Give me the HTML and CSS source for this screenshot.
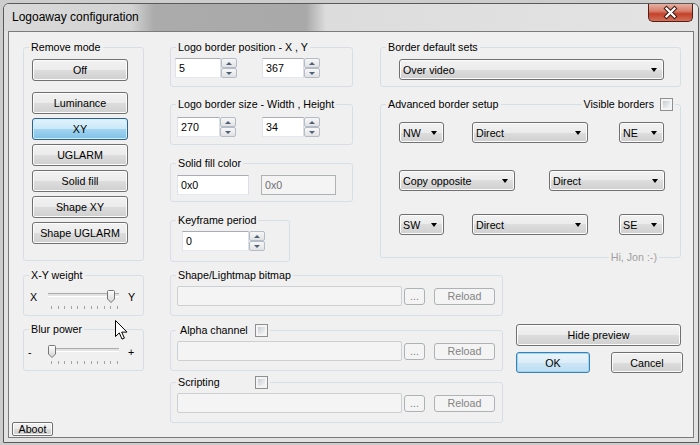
FILE: index.html
```html
<!DOCTYPE html>
<html lang="en">
<head>
  <meta charset="UTF-8" />
  <title>Logoaway configuration</title>
  <link rel="stylesheet" href="styles.css">
</head>
<body>

  <div class="window">
    <div class="titlebar">
      <span class="title">Logoaway configuration</span>
      <span class="close">
        <svg width="45" height="18" viewBox="0 0 45 18">
          <path d="M18.5 4.5 L26.5 12.5 M26.5 4.5 L18.5 12.5" stroke="#3e1a12" stroke-width="4.2" stroke-linecap="square"/>
          <path d="M18.5 4.5 L26.5 12.5 M26.5 4.5 L18.5 12.5" stroke="#fff" stroke-width="2.2" stroke-linecap="square"/>
        </svg>
      </span>
    </div>

    <div class="client">
      <!-- upper half -->
      <div class="top">
        <div class="col col-left">
          <div class="group g-mode">
            <span class="cap">Remove mode</span>
            <button class="btn">Off</button>
            <button class="btn sep">Luminance</button>
            <button class="btn on">XY</button>
            <button class="btn">UGLARM</button>
            <button class="btn">Solid fill</button>
            <button class="btn">Shape XY</button>
            <button class="btn">Shape UGLARM</button>
          </div>
        </div>

        <div class="col col-mid">
          <div class="group g-pos">
            <span class="cap">Logo border position - X , Y</span>
            <div class="row">
              <div class="spin"><span class="edit w46">5</span><span class="ud"><i class="up"></i><i class="dn"></i></span></div>
              <div class="spin second"><span class="edit w42">367</span><span class="ud"><i class="up"></i><i class="dn"></i></span></div>
            </div>
          </div>
          <div class="group g-size">
            <span class="cap">Logo border size - Width , Height</span>
            <div class="row">
              <div class="spin"><span class="edit w43">270</span><span class="ud"><i class="up"></i><i class="dn"></i></span></div>
              <div class="spin second"><span class="edit w42">34</span><span class="ud"><i class="up"></i><i class="dn"></i></span></div>
            </div>
          </div>
          <div class="group g-fill">
            <span class="cap">Solid fill color</span>
            <div class="row">
              <span class="edit w72">0x0</span>
              <span class="edit ro w75">0x0</span>
            </div>
          </div>
          <div class="group g-key">
            <span class="cap">Keyframe period</span>
            <div class="row">
              <div class="spin"><span class="edit w67">0</span><span class="ud"><i class="up"></i><i class="dn"></i></span></div>
            </div>
          </div>
        </div>

        <div class="col col-right">
          <div class="group g-sets">
            <span class="cap">Border default sets</span>
            <div class="sel w265">Over video</div>
          </div>
          <div class="group g-adv">
            <div class="caprow">
              <span class="cap">Advanced border setup</span>
              <span class="cap cc">Visible borders <span class="chk"></span></span>
            </div>
            <div class="row r1">
              <div class="sel w45">NW</div>
              <div class="sel w116 mid">Direct</div>
              <div class="sel w45 end">NE</div>
            </div>
            <div class="row r2">
              <div class="sel w116">Copy opposite</div>
              <div class="sel w116 opp">Direct</div>
            </div>
            <div class="row r3">
              <div class="sel w45">SW</div>
              <div class="sel w116 mid">Direct</div>
              <div class="sel w45 end">SE</div>
            </div>
            <span class="cap hi">Hi, Jon :-)</span>
          </div>
        </div>
      </div>

      <!-- lower half -->
      <div class="bottom">
        <div class="col col-left">
          <div class="group g-xy">
            <span class="cap">X-Y weight</span>
            <div class="slider">
              <span class="sl-end">X</span>
              <div class="sl-body">
                <div class="sl-track">
                  <span class="sl-thumb" style="left:59px">
                    <svg width="8" height="13" viewBox="0 0 8 13">
                      <defs><linearGradient id="tg1" x1="0" y1="0" x2="0" y2="1"><stop offset="0" stop-color="#fdfdfd"/><stop offset="1" stop-color="#d6d6d6"/></linearGradient></defs>
                      <path d="M1.5 .5h5a1 1 0 0 1 1 1v7.5l-3.5 3.5l-3.5-3.5v-7.5a1 1 0 0 1 1-1z" fill="url(#tg1)" stroke="#767676"/>
                    </svg>
                  </span>
                </div>
                <div class="sl-ticks"><i></i><i></i><i></i><i></i><i></i><i></i><i></i><i></i><i></i><i></i><i></i></div>
              </div>
              <span class="sl-end r">Y</span>
            </div>
          </div>
          <div class="group g-blur">
            <span class="cap">Blur power</span>
            <div class="slider">
              <span class="sl-end minus">-</span>
              <div class="sl-body">
                <div class="sl-track">
                  <span class="sl-thumb" style="left:0px">
                    <svg width="8" height="13" viewBox="0 0 8 13">
                      <defs><linearGradient id="tg2" x1="0" y1="0" x2="0" y2="1"><stop offset="0" stop-color="#fdfdfd"/><stop offset="1" stop-color="#d6d6d6"/></linearGradient></defs>
                      <path d="M1.5 .5h5a1 1 0 0 1 1 1v7.5l-3.5 3.5l-3.5-3.5v-7.5a1 1 0 0 1 1-1z" fill="url(#tg2)" stroke="#767676"/>
                    </svg>
                  </span>
                </div>
                <div class="sl-ticks"><i></i><i></i><i></i><i></i><i></i><i></i><i></i><i></i><i></i><i></i><i></i></div>
              </div>
              <span class="sl-end r">+</span>
            </div>
          </div>
          <button class="btn aboot">Aboot</button>
        </div>

        <div class="col col-wide">
          <div class="group g-file">
            <span class="cap">Shape/Lightmap bitmap</span>
            <div class="row">
              <span class="edit off w225"></span>
              <button class="btn dis dots">...</button>
              <button class="btn dis reload">Reload</button>
            </div>
          </div>
          <div class="group g-file g-alpha">
            <span class="cap cc fixed pad">Alpha channel <span class="chk"></span></span>
            <div class="row">
              <span class="edit off w225"></span>
              <button class="btn dis dots">...</button>
              <button class="btn dis reload">Reload</button>
            </div>
          </div>
          <div class="group g-file g-script">
            <span class="cap cc fixed">Scripting <span class="chk"></span></span>
            <div class="row">
              <span class="edit off w225"></span>
              <button class="btn dis dots">...</button>
              <button class="btn dis reload">Reload</button>
            </div>
          </div>
        </div>

        <div class="col col-btns">
          <button class="btn hide">Hide preview</button>
          <div class="row">
            <button class="btn ok">OK</button>
            <button class="btn cancel">Cancel</button>
          </div>
        </div>
      </div>
    </div>
  </div>

  <!-- mouse pointer caught in the screenshot -->
  <svg class="cursor" width="13" height="21" viewBox="0 0 13 21">
    <path d="M.5 .5v16l3.8-3.6 2.7 6.2 2.4-1-2.7-6h5.3z" fill="#fff" stroke="#000"/>
  </svg>

</body>
</html>
```

FILE: styles.css
```css
/* General styling */
* {
  box-sizing: border-box;
}

body {
  margin: 0;
  background: #cdcdcd;
  font-family: "Liberation Sans", Arial, sans-serif;
  font-size: 10.7px;
  color: #000;
  overflow: hidden;
}

/* Window frame */
.window {
  display: flex;
  flex-direction: column;
  width: 696px;
  height: 440px;
  margin: 3px 0 0 3px;
  padding: 0 4px 4px;
  border: 1px solid #595959;
  border-radius: 6px 6px 0 0;
  background: #e2e2e2;
}

.titlebar {
  display: flex;
  align-items: flex-start;
  flex: none;
  height: 27px;
  margin: 0 -4px;
  padding-left: 8px;
  border-radius: 5px 5px 0 0;
  background: linear-gradient(to right, #dadada 0, #d2d2d2 128px, #ababab 150px, #a9a9a9 302px, #dcdcdc 322px, #e4e4e4 100%);
}

.title {
  font-size: 12px;
  line-height: 27px;
}

.close {
  display: block;
  width: 45px;
  height: 18px;
  margin-left: auto;
  margin-right: 5px;
  border: 1px solid #4d2118;
  border-top: none;
  border-radius: 0 0 5px 5px;
  background: linear-gradient(#e6b0a3, #d67d69 42%, #c4412a 58%, #d3705a);
}

.close svg {
  display: block;
  margin: 0 -1px;
}

.client {
  display: flex;
  flex-direction: column;
  height: 407px;
  border: 1px solid #7b7b7b;
  background: #f0f0f0;
}

.top {
  display: flex;
  align-items: flex-start;
  padding: 15px 0 0 14px;
}

.bottom {
  display: flex;
  flex: 1;
  margin-top: 13px;
  padding-left: 14px;
}

.col {
  display: flex;
  flex-direction: column;
}

.col-left {
  width: 121px;
}

.col-mid {
  width: 183px;
  margin-left: 26px;
}

.col-right {
  width: 301px;
  margin-left: 27px;
}

.col-wide {
  width: 333px;
  margin-left: 26px;
}

.col-btns {
  width: 166px;
  margin-left: 13px;
}

/* Group boxes */
.group {
  display: flex;
  flex-direction: column;
  align-items: flex-start;
  border: 1px solid #d5dfe5;
  border-radius: 3px;
}

.cap {
  flex: none;
  height: 13px;
  line-height: 13px;
  margin: -7px 0 0 5px;
  padding: 0 2px;
  background: #f0f0f0;
  white-space: nowrap;
}

.cap.cc {
  display: flex;
  align-items: center;
}

.cap.cc .chk {
  margin-left: 6px;
}

.cap.fixed {
  width: 94px;
  justify-content: space-between;
}

.cap.pad {
  padding-left: 4px;
}

.caprow {
  display: flex;
  align-self: stretch;
  height: 13px;
  margin-top: -7px;
}

.caprow .cap {
  margin-top: 0;
}

.caprow .cc {
  margin-left: auto;
  margin-right: 5px;
}

.cap.hi {
  align-self: flex-end;
  margin: auto 21px -7px 0;
  color: #a0a0a0;
}

.row {
  display: flex;
  align-items: center;
}

/* Buttons */
.btn {
  display: block;
  flex: none;
  height: 22px;
  padding: 0;
  border: 1px solid #707070;
  border-radius: 3px;
  background: linear-gradient(#f2f2f2, #ebebeb 50%, #dddddd 50%, #cfcfcf);
  box-shadow: inset 0 0 0 1px #fcfcfc;
  font: inherit;
  color: #000;
  text-align: center;
}

.btn.on {
  border-color: #2c628b;
  background: linear-gradient(#e1f2fb, #c9e8f8 50%, #a3d5f1 50%, #7fc1e6);
  box-shadow: inset 0 0 0 1px #d6eefb;
}

.btn.ok {
  width: 74px;
  height: 21px;
  border-color: #3c7fb1;
  background: linear-gradient(#e9f4fb, #dcedf8 50%, #cbe5f5 50%, #bedef1);
  box-shadow: inset 0 0 0 1px #9cd6f5;
}

.btn.cancel {
  width: 72px;
  height: 21px;
  margin-left: 21px;
}

.btn.hide {
  width: 165px;
  margin-top: 49px;
}

.col-btns .row {
  margin-top: 6px;
}

.btn.dis {
  height: 17px;
  border-color: #adb2b5;
  background: #f4f4f4;
  box-shadow: none;
  color: #838383;
}

.btn.dots {
  width: 21px;
  margin-left: 2px;
}

.btn.reload {
  width: 61px;
  margin-left: 9px;
}

.btn.aboot {
  width: 41px;
  height: 14px;
  margin: auto 0 1px -11px;
  border-radius: 2px;
  line-height: 12px;
}

/* Remove mode */
.g-mode {
  height: 214px;
}

.g-mode .btn {
  width: 96px;
  margin: 4px 0 0 8px;
}

.g-mode .btn:first-of-type {
  margin-top: 5px;
}

.g-mode .btn.sep {
  margin-top: 11px;
}

/* Edits and spinners */
.edit {
  display: block;
  flex: none;
  height: 20px;
  line-height: 18px;
  padding-left: 3px;
  border: 1px solid;
  border-color: #abadb3 #dbdfe6 #e3e9ef #e2e3ea;
  background: #fff;
}

.edit.ro {
  margin-left: 12px;
  border-color: #adb2b5;
  background: #f4f4f4;
  color: #6d6d6d;
}

.edit.off {
  border-color: #cdd0d3;
  border-radius: 2px;
  background: #f4f4f4;
}

.spin {
  display: flex;
}

.ud {
  display: flex;
  flex-direction: column;
  width: 16px;
  height: 20px;
}

.ud i {
  display: flex;
  flex: 1;
  align-items: center;
  justify-content: center;
  border: 1px solid #b3bcc8;
  border-radius: 2px;
  background: linear-gradient(#f7f7f7, #e2e2e2);
}

.ud i::after {
  content: "";
  border-left: 3px solid transparent;
  border-right: 3px solid transparent;
}

.ud .up::after {
  border-bottom: 3px solid #4d5f79;
}

.ud .dn::after {
  border-top: 3px solid #4d5f79;
}

.w42 { width: 42px; }
.w43 { width: 43px; }
.w45 { width: 45px; }
.w46 { width: 46px; }
.w67 { width: 67px; }
.w72 { width: 72px; }
.w75 { width: 75px; }
.w116 { width: 116px; }
.w225 { width: 225px; }
.w265 { width: 265px; }

.g-pos {
  width: 183px;
  height: 40px;
}

.g-pos .row {
  margin: 4px 0 0 4px;
}

.g-pos .second {
  margin-left: 25px;
}

.g-size {
  width: 183px;
  height: 41px;
  margin-top: 17px;
}

.g-size .row {
  margin: 6px 0 0 6px;
}

.g-size .second {
  margin-left: 26px;
}

.g-fill {
  width: 183px;
  height: 39px;
  margin-top: 18px;
}

.g-fill .row {
  margin: 5px 0 0 6px;
}

.g-key {
  width: 120px;
  height: 42px;
  margin-top: 18px;
}

.g-key .row {
  margin: 4px 0 0 11px;
}

/* Combo boxes */
.sel {
  display: flex;
  flex: none;
  align-items: center;
  height: 21px;
  padding: 0 6px 0 3px;
  border: 1px solid #707070;
  border-radius: 3px;
  background: linear-gradient(#f2f2f2, #ebebeb 50%, #dddddd 50%, #cfcfcf);
  box-shadow: inset 0 0 0 1px #fcfcfc;
  white-space: nowrap;
}

.sel::after {
  content: "";
  margin-left: auto;
  border-left: 3.5px solid transparent;
  border-right: 3.5px solid transparent;
  border-top: 4px solid #000;
}

.g-sets {
  height: 40px;
}

.g-sets .sel {
  margin: 5px 0 0 18px;
}

.g-adv {
  height: 154px;
  margin-top: 17px;
}

.g-adv .row {
  margin-left: 18px;
}

.g-adv .r1 {
  margin-top: 11px;
}

.g-adv .r2 {
  margin-top: 27px;
}

.g-adv .r3 {
  margin-top: 23px;
}

.sel.mid {
  margin-left: 28px;
}

.sel.end {
  margin-left: 31px;
}

.sel.opp {
  margin-left: 34px;
}

/* Check boxes */
.chk {
  display: block;
  flex: none;
  width: 13px;
  height: 13px;
  padding: 2px;
  border: 1px solid #8f8f8f;
  background: linear-gradient(135deg, #c9cdd3, #f6f6f6) content-box, #f4f4f4;
}

/* Bitmap / alpha / scripting */
.g-file {
  width: 333px;
  height: 41px;
}

.g-file .row {
  margin: 4px 0 0 6px;
}

.g-alpha {
  margin-top: 14px;
}

.g-script {
  margin-top: 11px;
}

/* Sliders */
.g-xy {
  height: 41px;
}

.g-blur {
  height: 42px;
  margin-top: 13px;
}

.slider {
  display: flex;
  align-items: flex-start;
  margin: 8px 0 0 6px;
}

.g-blur .slider {
  margin-top: 9px;
}

.sl-end {
  width: 18px;
  margin-top: 1px;
  line-height: 13px;
}

.sl-end.minus {
  width: 20px;
  margin-left: -2px;
}

.sl-end.r {
  width: auto;
  margin-left: 9px;
}

.sl-body {
  width: 71px;
  padding-top: 3px;
}

.sl-track {
  position: relative;
  height: 4px;
  border-top: 1px solid #acacac;
  border-bottom: 1px solid #fff;
  background: #e3e3e3;
}

.sl-thumb {
  position: absolute;
  top: -4px;
  display: block;
  width: 8px;
  height: 13px;
}

.sl-thumb svg {
  display: block;
}

.sl-ticks {
  display: flex;
  justify-content: space-between;
  height: 3px;
  margin: 9px 1px 0 3px;
}

.sl-ticks i {
  width: 1px;
  background: #a3a3a3;
}

/* Mouse pointer over the dialog */
.cursor {
  position: absolute;
  left: 115px;
  top: 320px;
}
```
